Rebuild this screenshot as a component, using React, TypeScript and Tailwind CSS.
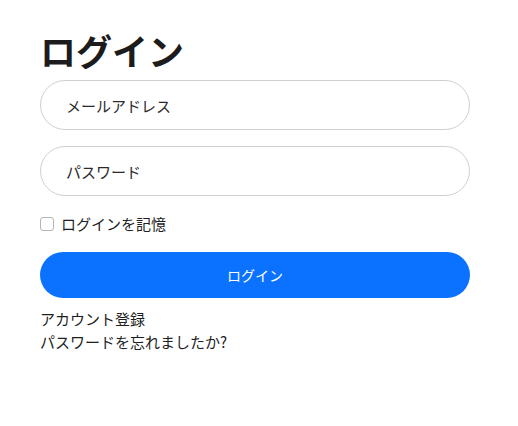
import React from "react";

export default function App() {
  return (
    <div
      className="w-[518px] h-[426px] bg-white px-[40px] pt-[28px] text-[#1f1f1f]"
      style={{ fontFamily: '"Noto Sans CJK JP", "Noto Sans", sans-serif' }}
    >
      <h1 className="text-[36px] font-bold leading-[44px] text-[#1c1c1c]">ログイン</h1>
      <div className="mt-[8px] flex flex-col gap-[16px] w-[430px]">
        <input
          type="email"
          placeholder="メールアドレス"
          className="h-[50px] w-full rounded-full border border-[#cfcfd6] px-[25px] text-[15px] outline-none placeholder:text-[#2b2b2b]"
        />
        <input
          type="password"
          placeholder="パスワード"
          className="h-[50px] w-full rounded-full border border-[#cfcfd6] px-[25px] text-[15px] outline-none placeholder:text-[#2b2b2b]"
        />
      </div>
      <label className="mt-[16px] flex h-[24px] items-center gap-[7px] text-[15px]">
        <span className="inline-block h-[14px] w-[14px] rounded-[3px] border border-[#b5b5b5] bg-white" />
        <span>ログインを記憶</span>
      </label>
      <button className="mt-[16px] flex h-[46px] w-[430px] items-center justify-center rounded-full bg-[#0a72ff] text-[14px] text-white">
        ログイン
      </button>
      <div className="mt-[9px] flex flex-col text-[15px] leading-[23px]">
        <span>アカウント登録</span>
        <span>パスワードを忘れましたか?</span>
      </div>
    </div>
  );
}
